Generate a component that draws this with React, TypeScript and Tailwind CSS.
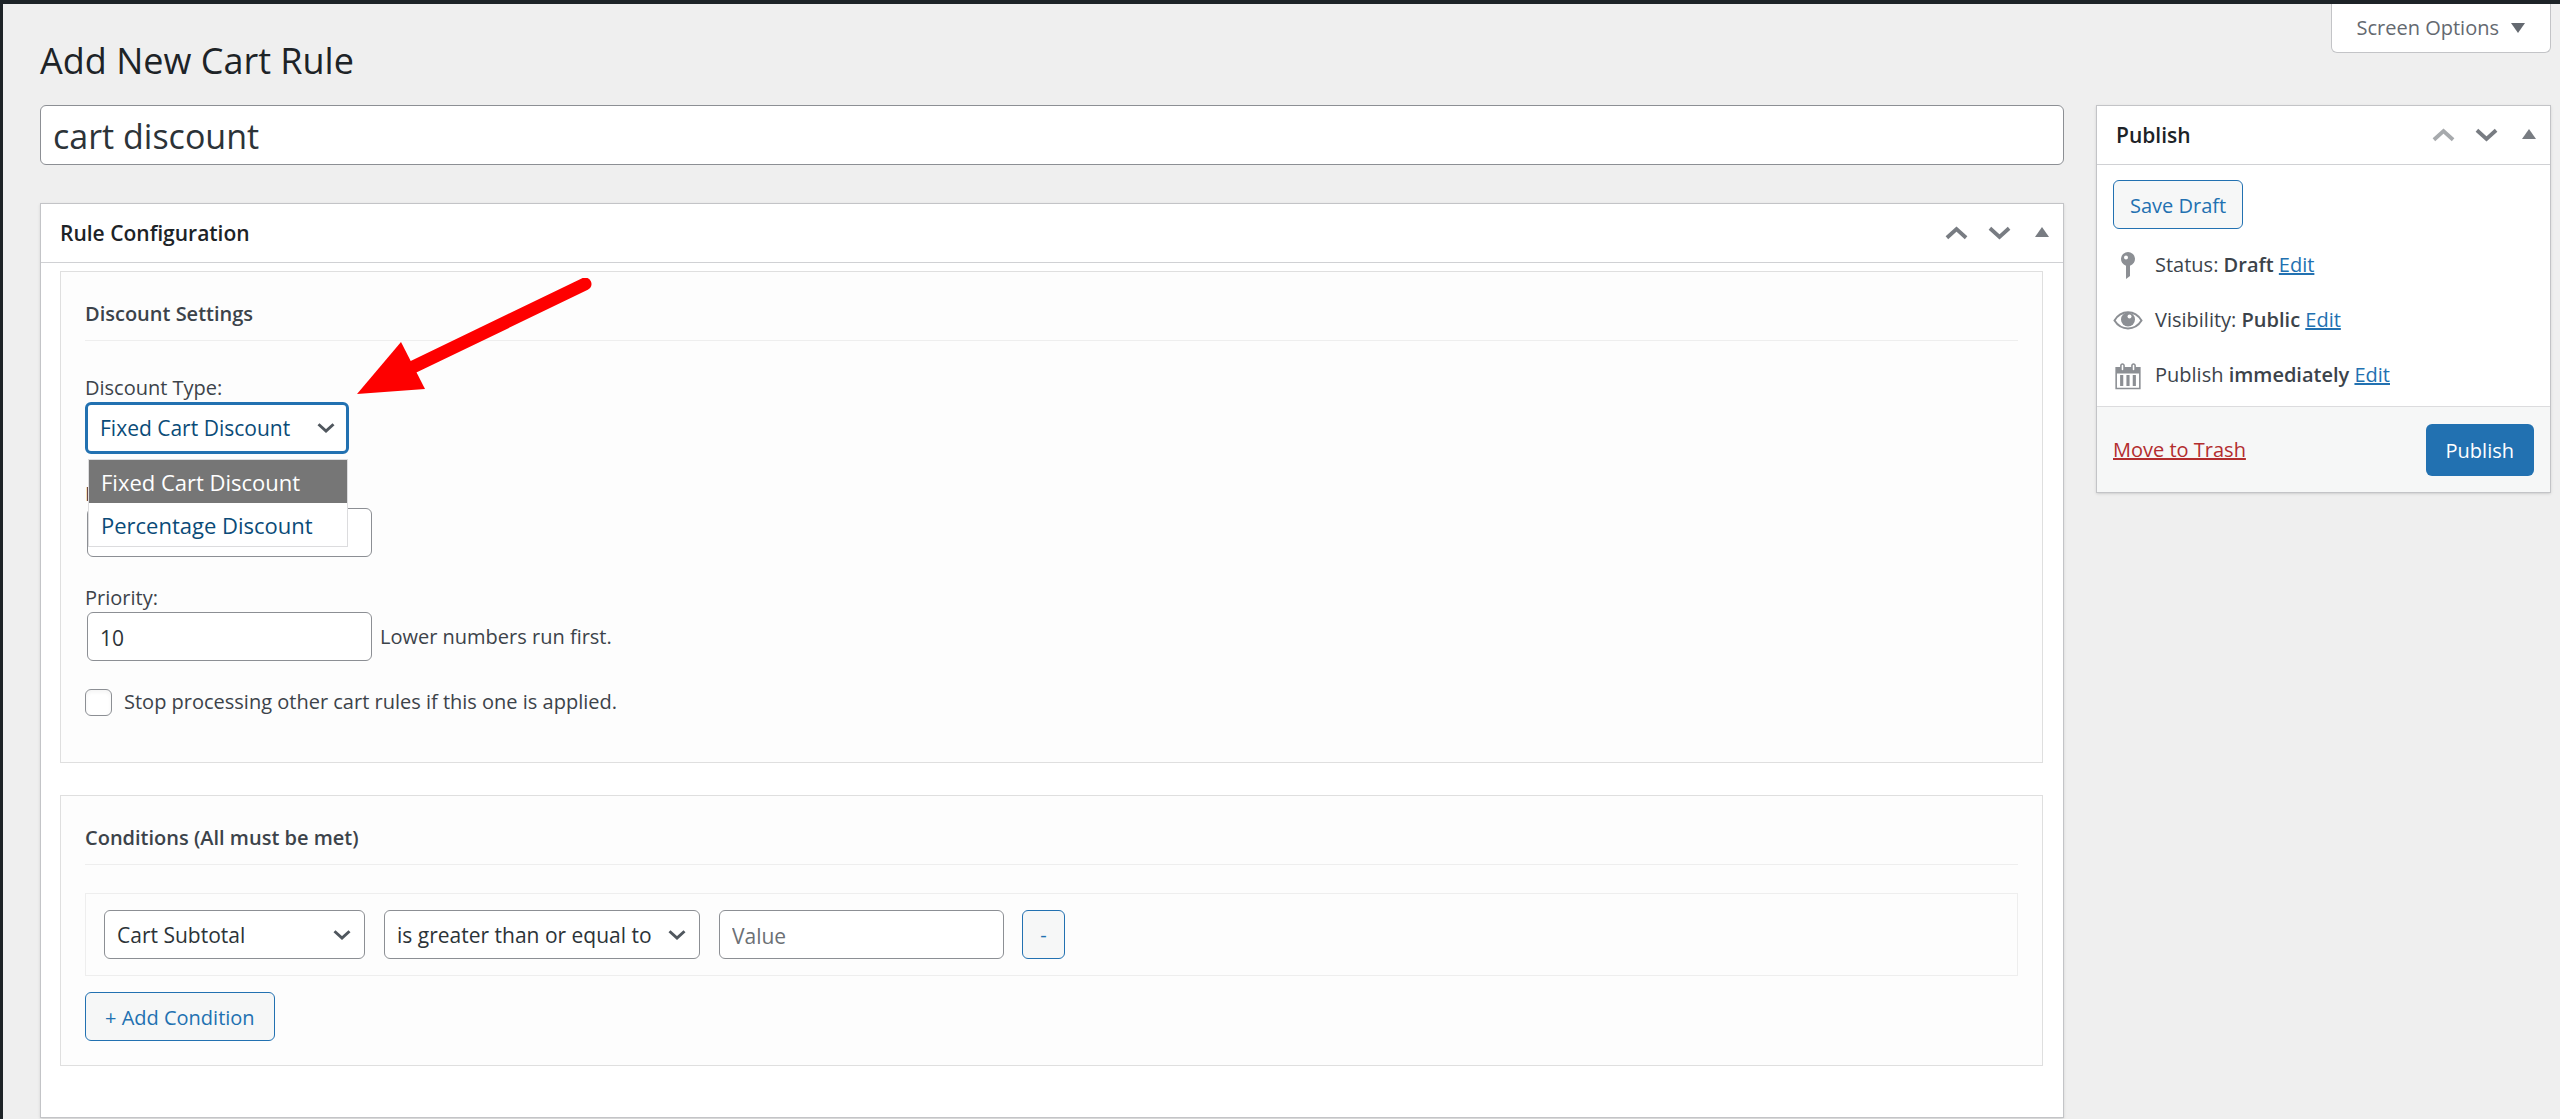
import React, { useState } from 'react';

const SELECT_OPTIONS = ['Fixed Cart Discount', 'Percentage Discount'];

interface IconProps {
  className?: string;
}

function ChevronIcon({ className }: IconProps) {
  return (
    <svg viewBox="0 0 24 16" className={className} fill="none" stroke="currentColor" strokeWidth="4">
      <path d="M2 3 L12 12 L22 3" />
    </svg>
  );
}

function PinIcon() {
  return (
    <svg viewBox="0 0 30 30" className="h-[30px] w-[30px]" fill="#8c8f94">
      <path
        fillRule="evenodd"
        d="M15 2a7 7 0 0 1 2 13.700V26l-4 3V15.700A7 7 0 0 1 15 2zM13 5.500a2 2 0 1 0 0 4a2 2 0 0 0 0-4z"
      />
    </svg>
  );
}

function EyeIcon() {
  return (
    <svg viewBox="0 0 30 30" className="h-[30px] w-[30px]">
      <path d="M1.500 15.500C8 4.500 22 4.500 28.500 15.500C22 26 8 26 1.500 15.500z" fill="none" stroke="#8c8f94" strokeWidth="2" />
      <circle cx="15" cy="14.500" r="7" fill="#8c8f94" />
      <circle cx="16.500" cy="11.500" r="2" fill="#fff" />
    </svg>
  );
}

function CalendarIcon() {
  return (
    <svg viewBox="0.500 0 19 18" className="h-[30px] w-[30px]" fill="#8c8f94">
      <path d="M15 4h3v14H2V4h3V3c0-.83.67-1.5 1.5-1.5S8 2.170 8 3v1h4V3c0-.83.67-1.5 1.5-1.5S15 2.170 15 3v1zM6 3v2.500c0 .28.22.5.5.5s.5-.22.5-.5V3c0-.28-.22-.5-.5-.5S6 2.720 6 3zm7 0v2.500c0 .28.22.5.5.5s.5-.22.5-.5V3c0-.28-.22-.5-.5-.5s-.5.22-.5.5zm4 14V8H3v9h14zM7 16V9H5v7h2zm4 0V9H9v7h2zm4 0V9h-2v7h2z" />
    </svg>
  );
}

interface PostboxProps {
  title: string;
  firstBox?: boolean;
  children: React.ReactNode;
}

function Postbox({ title, firstBox, children }: PostboxProps) {
  return (
    <section className="border border-[#c3c4c7] bg-white shadow-sm">
      <header className="flex h-[59px] items-center justify-between border-b border-[#d0d1d4] pr-3.5 pl-[19px]">
        <h2 className="pt-0.5 text-[21px] font-semibold text-[#1d2327]">{title}</h2>
        <div className="flex items-center text-[#787c82]">
          <button type="button" aria-label="Move up" className={firstBox ? 'mr-5 text-[#a7aaad]' : 'mr-5'}>
            <ChevronIcon className="h-4 w-[23px] rotate-180" />
          </button>
          <button type="button" aria-label="Move down" className="mr-6">
            <ChevronIcon className="h-4 w-[23px]" />
          </button>
          <button type="button" aria-label="Toggle panel" className="pb-0.5">
            <svg viewBox="0 0 14 10" className="h-2.5 w-3.5" fill="currentColor">
              <path d="M0 10 L7 0 L14 10z" />
            </svg>
          </button>
        </div>
      </header>
      {children}
    </section>
  );
}

interface SettingsSectionProps {
  title: string;
  children: React.ReactNode;
}

function SettingsSection({ title, children }: SettingsSectionProps) {
  return (
    <div className="border border-[#dfdfdf] bg-[#fdfdfd] px-6">
      <h3 className="border-b border-[#eee] pt-[26px] pb-2.5 text-[20px] leading-8 font-semibold">{title}</h3>
      {children}
    </div>
  );
}

interface SelectBoxProps {
  id?: string;
  label?: string;
  value: string;
  options: string[];
  focused?: boolean;
  className: string;
  onChange: (value: string) => void;
}

function SelectBox({ id, label, value, options, focused, className, onChange }: SelectBoxProps) {
  return (
    <div className={'relative ' + className}>
      <select
        id={id}
        aria-label={label}
        value={value}
        onChange={(e) => onChange(e.target.value)}
        className={
          focused
            ? 'h-[52px] w-full appearance-none rounded-md border-[3px] border-[#2271b1] bg-white pt-0.5 pl-3 text-[21px] text-[#0a4b78] outline-none'
            : 'h-[49px] w-full appearance-none rounded-md border border-[#8c8f94] bg-white pt-0.5 pl-3 text-[21px] text-[#2c3338] outline-none'
        }
      >
        {options.map((option) => (
          <option key={option}>{option}</option>
        ))}
      </select>
      <ChevronIcon className="pointer-events-none absolute top-1/2 right-3.5 h-3 w-[18px] -translate-y-1/2 text-[#50575e]" />
    </div>
  );
}

interface StatusRowProps {
  icon: React.ReactNode;
  label: string;
  value: string;
}

function StatusRow({ icon, label, value }: StatusRowProps) {
  return (
    <div className="flex h-[55px] items-center gap-3">
      {icon}
      <span>
        {label} <strong className="font-semibold">{value}</strong>{' '}
        <a href="#edit" className="text-[#2271b1] underline">Edit</a>
      </span>
    </div>
  );
}

function PublishBox() {
  return (
    <Postbox title="Publish" firstBox>
      <div className="px-4 pt-[15px] pb-1">
        <button type="button" className="h-[49px] rounded-md border border-[#2271b1] bg-[#f6f7f7] px-4 pt-0.5 text-[#2271b1]">
          Save Draft
        </button>
        <div className="pt-2">
          <StatusRow icon={<PinIcon />} label="Status:" value="Draft" />
          <StatusRow icon={<EyeIcon />} label="Visibility:" value="Public" />
          <StatusRow icon={<CalendarIcon />} label="Publish" value="immediately" />
        </div>
      </div>
      <div className="flex h-[86px] items-center justify-between border-t border-[#dcdcde] bg-[#f6f7f7] px-4">
        <a href="#trash" className="text-[#b32d2e] underline">Move to Trash</a>
        <button type="button" className="h-[52px] rounded-md bg-[#2271b1] px-5 pt-0.5 text-white">Publish</button>
      </div>
    </Postbox>
  );
}

function DiscountSettings() {
  const [discountType, setDiscountType] = useState(SELECT_OPTIONS[0]);
  const [amount, setAmount] = useState('');
  const [priority, setPriority] = useState('10');
  const [stopProcessing, setStopProcessing] = useState(false);

  return (
    <SettingsSection title="Discount Settings">
      <div className="pt-[33px] pb-[45px]">
        <label htmlFor="discount-type" className="block leading-7">Discount Type:</label>
        <div className="relative w-[264px]">
          <SelectBox
            id="discount-type"
            value={discountType}
            options={SELECT_OPTIONS}
            focused
            className="w-full"
            onChange={setDiscountType}
          />
          <ul role="listbox" className="absolute top-[57px] left-[3px] z-10 w-[260px] border border-[#dcdcde] bg-white text-[22px]">
            {SELECT_OPTIONS.map((option) => (
              <li
                key={option}
                role="option"
                aria-selected={option === discountType}
                onClick={() => setDiscountType(option)}
                className={
                  option === discountType
                    ? 'h-[43px] bg-[#767676] px-3 leading-[44px] text-white'
                    : 'h-[43px] px-3 leading-[44px] text-[#0a4b78]'
                }
              >
                {option}
              </li>
            ))}
          </ul>
        </div>

        <label htmlFor="discount-value" className="mt-[26px] block leading-7">Discount Value:</label>
        <input
          id="discount-value"
          type="text"
          value={amount}
          onChange={(e) => setAmount(e.target.value)}
          className="ml-0.5 block h-[49px] w-[285px] rounded-md border border-[#8c8f94] bg-white px-3 text-[21px] text-[#2c3338]"
        />

        <label htmlFor="priority" className="mt-[27px] block leading-7">Priority:</label>
        <div className="flex items-center gap-2">
          <input
            id="priority"
            type="text"
            value={priority}
            onChange={(e) => setPriority(e.target.value)}
            className="ml-0.5 h-[49px] w-[285px] rounded-md border border-[#8c8f94] bg-white px-3 pt-0.5 text-[21px] text-[#2c3338]"
          />
          <span>Lower numbers run first.</span>
        </div>

        <label className="mt-[26px] flex items-center gap-3">
          <input
            type="checkbox"
            checked={stopProcessing}
            onChange={(e) => setStopProcessing(e.target.checked)}
            className="h-[27px] w-[27px] appearance-none rounded-md border border-[#8c8f94] bg-white shadow-inner checked:bg-[#2271b1]"
          />
          Stop processing other cart rules if this one is applied.
        </label>
      </div>
    </SettingsSection>
  );
}

function Conditions() {
  const [field, setField] = useState('Cart Subtotal');
  const [operator, setOperator] = useState('is greater than or equal to');
  const [value, setValue] = useState('');

  return (
    <SettingsSection title="Conditions (All must be met)">
      <div className="pt-7 pb-6">
        <div className="flex items-center border border-[#eee] px-[18px] py-4">
          <SelectBox
            label="Condition"
            value={field}
            options={['Cart Subtotal', 'Cart Item Count']}
            className="mr-[19px] w-[261px]"
            onChange={setField}
          />
          <SelectBox
            label="Comparison"
            value={operator}
            options={['is greater than or equal to', 'is less than or equal to']}
            className="mr-[19px] w-[316px]"
            onChange={setOperator}
          />
          <input
            type="text"
            aria-label="Value"
            placeholder="Value"
            value={value}
            onChange={(e) => setValue(e.target.value)}
            className="mr-[18px] h-[49px] w-[285px] rounded-md border border-[#8c8f94] bg-white px-3 pt-0.5 text-[21px] placeholder:text-[#6c7075]"
          />
          <button type="button" className="h-[49px] w-[43px] rounded-md border border-[#2271b1] bg-[#f6f7f7] text-[#2271b1]">
            -
          </button>
        </div>
        <button type="button" className="mt-4 h-[49px] rounded-md border border-[#2271b1] bg-[#f6f7f7] px-[19px] pt-0.5 text-[#2271b1]">
          + Add Condition
        </button>
      </div>
    </SettingsSection>
  );
}

export default function App() {
  const [title, setTitle] = useState('cart discount');

  return (
    <main className="min-h-screen border-t-4 border-l-[3px] border-[#1d2327] bg-[#efefef] pr-[9px] pl-[37px] font-['Open_Sans','Noto_Sans',sans-serif] text-[20px] text-[#3c434a]">
      <div className="flex items-start justify-between">
        <h1 className="pt-[37px] pb-6 text-[36px] leading-10 text-[#1d2327]">Add New Cart Rule</h1>
        <button
          type="button"
          className="flex h-[49px] items-center gap-3 rounded-b-md border border-t-0 border-[#c3c4c7] bg-white px-[25px] text-[#646970]"
        >
          Screen Options
          <svg viewBox="0 0 14 10" className="h-2.5 w-3.5" fill="currentColor">
            <path d="M0 0 L14 0 L7 10z" />
          </svg>
        </button>
      </div>

      <div className="flex items-start gap-8">
        <div className="min-w-0 flex-1">
          <input
            type="text"
            aria-label="Title"
            value={title}
            onChange={(e) => setTitle(e.target.value)}
            className="mb-[38px] block h-[60px] w-full rounded-md border border-[#8c8f94] bg-white px-3 pt-0.5 text-[34px] text-[#2c3338]"
          />
          <div className="relative">
            <Postbox title="Rule Configuration">
              <div className="flex flex-col gap-8 pt-2 pr-5 pb-[51px] pl-[19px]">
                <DiscountSettings />
                <Conditions />
              </div>
            </Postbox>
            <svg viewBox="0 0 240 120" className="pointer-events-none absolute top-[75px] left-[315px] z-20 h-[120px] w-[240px]">
              <path d="M58 89 L230 6" stroke="#fe0000" strokeWidth="13" strokeLinecap="round" />
              <path d="M2 116 L46 64 L70 111z" fill="#fe0000" />
            </svg>
          </div>
        </div>
        <aside className="w-[455px]">
          <PublishBox />
        </aside>
      </div>
    </main>
  );
}
